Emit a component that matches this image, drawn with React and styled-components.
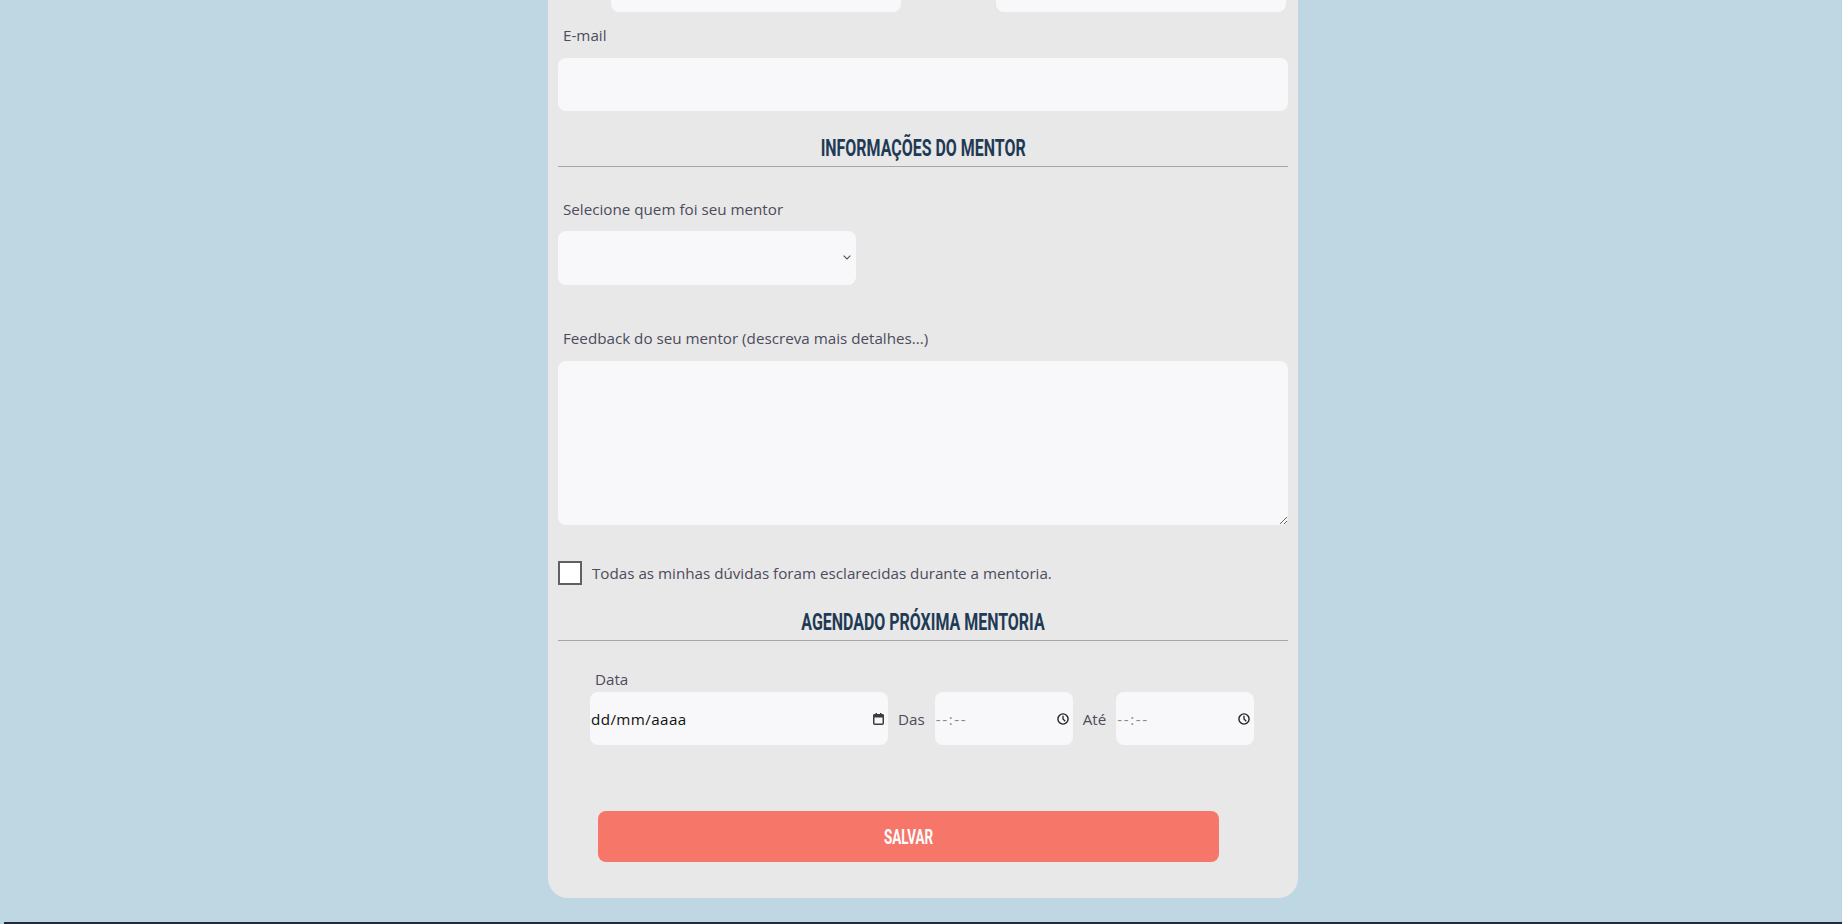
import React from "react";
import styled, { createGlobalStyle } from "styled-components";

const GlobalStyle = createGlobalStyle`
  * {
    box-sizing: border-box;
  }

  body {
    margin: 0;
    background: #bfd6e3;
    font-family: "Open Sans", "Noto Sans", sans-serif;
  }
`;

// the screenshot is taken scrolled down a bit, so the page starts above the window
const Page = styled.div`
  display: flex;
  flex-direction: column;
  align-items: center;
  margin-top: -95px;
  padding-left: 4px;
`;

const Card = styled.form`
  width: 750px;
  background: #e8e8e8;
  border-radius: 20px;
  padding: 20px 10px 36px;
  display: flex;
  flex-direction: column;
`;

const NameRow = styled.div`
  display: grid;
  grid-template-columns: 290px 290px;
  justify-content: end;
  column-gap: 95px;
  padding-right: 2px;
`;

const Field = styled.div`
  display: flex;
  flex-direction: column;
  align-items: flex-start;
  margin-top: ${(p) => p.$top || 0}px;
`;

const Label = styled.label`
  display: block;
  font-size: 15.2px;
  line-height: 22px;
  height: 22px;
  color: #4d4b5c;
  padding-left: 5px;
  margin-bottom: ${(p) => p.$gap ?? 12}px;
`;

const Input = styled.input`
  width: 100%;
  height: 53px;
  border: none;
  border-radius: 8px;
  background: #f8f8fa;
  outline: none;
  font-family: inherit;
`;

const SelectWrap = styled.div`
  position: relative;
  width: 298px;
  height: 54px;
`;

const Select = styled.select`
  appearance: none;
  width: 100%;
  height: 100%;
  border: none;
  border-radius: 8px;
  background: #f8f8fa;
  color: #333;
  font-family: inherit;
  outline: none;
  padding: 0 24px 0 8px;
`;

const Chevron = styled.svg`
  position: absolute;
  right: 5px;
  top: 24px;
  pointer-events: none;
`;

const TextArea = styled.textarea`
  display: block;
  width: 100%;
  height: 164px;
  border: none;
  border-radius: 8px;
  background: #f8f8fa;
  outline: none;
  font-family: inherit;
`;

const SectionTitle = styled.h2`
  display: flex;
  justify-content: center;
  align-items: center;
  height: 33px;
  margin: 23px 0 0;
  padding-bottom: 4px;
  border-bottom: 1px solid #a6a6a6;
  font-size: 24px;
`;

// condensed display lettering, narrowed from Roboto bold
const TitleText = styled.span`
  display: block;
  line-height: 28px;
  font-family: Roboto, "Liberation Sans", sans-serif;
  font-weight: 700;
  color: #1f3a55;
  text-transform: uppercase;
  white-space: nowrap;
  transform: scaleX(0.665);
`;

const CheckRow = styled.label`
  display: flex;
  align-items: center;
  gap: 10px;
  margin-top: 36px;
  height: 24px;
  font-size: 15.2px;
  color: #4d4b5c;
`;

const CheckBox = styled.input`
  appearance: none;
  margin: 0;
  width: 24px;
  height: 24px;
  border: 2px solid #606060;
  background: #fff;
`;

const DateBlock = styled.div`
  margin-top: 27px;
  padding-left: 32px;
`;

const DateRow = styled.div`
  display: flex;
  align-items: center;
  gap: 10px;
  height: 53px;
`;

const InlineLabel = styled.span`
  font-size: 15.2px;
  color: #4d4b5c;
`;

const PickerBox = styled.div`
  width: ${(p) => p.$width}px;
  height: 53px;
  border-radius: 8px;
  background: #f8f8fa;
  display: flex;
  align-items: center;
  padding: 0 4px 0 1px;
`;

const PickerInput = styled.input`
  flex: 1;
  min-width: 0;
  border: none;
  background: transparent;
  outline: none;
  padding: 0;
  font-family: inherit;
  font-size: 15.2px;
  letter-spacing: ${(p) => (p.$muted ? "1.6px" : "0.4px")};

  &::placeholder {
    color: ${(p) => (p.$muted ? "#8a8a8a" : "#111")};
  }
`;

const SaveButton = styled.button`
  display: flex;
  justify-content: center;
  align-items: center;
  margin: 66px 0 0 40px;
  width: 621px;
  height: 51px;
  border: none;
  border-radius: 8px;
  background: #f6766a;
  cursor: pointer;
`;

const ButtonText = styled.span`
  display: block;
  font-family: Roboto, "Liberation Sans", sans-serif;
  font-weight: 700;
  font-size: 20px;
  color: #fff;
  transform: scaleX(0.67);
`;

const Footer = styled.footer`
  margin-top: 24px;
  width: 100%;
  height: 60px;
  background: #232a3b;
`;

const CalendarIcon = () => (
  <svg width="11" height="12" viewBox="0 0 11 12">
    <rect x="0.75" y="1.75" width="9.5" height="9.5" rx="1" fill="none" stroke="#3c3c3c" strokeWidth="1.5" />
    <rect x="0.5" y="1.5" width="10" height="3" fill="#3c3c3c" />
    <rect x="2.5" y="0" width="1.5" height="2" fill="#3c3c3c" />
    <rect x="7" y="0" width="1.5" height="2" fill="#3c3c3c" />
  </svg>
);

const ClockIcon = () => (
  <svg width="12" height="12" viewBox="0 0 12 12">
    <circle cx="6" cy="6" r="5.1" fill="none" stroke="#222" strokeWidth="1.4" />
    <path d="M6 2.8V6l2.2 2.2" fill="none" stroke="#222" strokeWidth="1.3" />
  </svg>
);

export default function App() {
  return (
    <>
      <GlobalStyle />
      <Page>
        <Card onSubmit={(e) => e.preventDefault()}>
          <NameRow>
            <Field>
              <Label>Nome</Label>
              <Input type="text" />
            </Field>
            <Field>
              <Label>Sobrenome</Label>
              <Input type="text" />
            </Field>
          </NameRow>

          <Field $top={12}>
            <Label>E-mail</Label>
            <Input type="email" />
          </Field>

          <SectionTitle>
            <TitleText>Informações do mentor</TitleText>
          </SectionTitle>

          <Field $top={31}>
            <Label $gap={11}>Selecione quem foi seu mentor</Label>
            <SelectWrap>
              <Select defaultValue="">
                <option value=""></option>
                <option>Mentor 1</option>
                <option>Mentor 2</option>
              </Select>
              <Chevron width="8" height="5" viewBox="0 0 8 5">
                <path d="M0.6 0.6L4 4L7.4 0.6" fill="none" stroke="#555" strokeWidth="1.1" />
              </Chevron>
            </SelectWrap>
          </Field>

          <Field $top={42}>
            <Label>Feedback do seu mentor (descreva mais detalhes...)</Label>
            <TextArea />
          </Field>

          <CheckRow>
            <CheckBox type="checkbox" />
            Todas as minhas dúvidas foram esclarecidas durante a mentoria.
          </CheckRow>

          <SectionTitle>
            <TitleText>Agendado próxima mentoria</TitleText>
          </SectionTitle>

          <DateBlock>
            <Label $gap={2}>Data</Label>
            <DateRow>
              <PickerBox $width={298}>
                <PickerInput placeholder="dd/mm/aaaa" />
                <CalendarIcon />
              </PickerBox>
              <InlineLabel>Das</InlineLabel>
              <PickerBox $width={138}>
                <PickerInput $muted placeholder="--:--" />
                <ClockIcon />
              </PickerBox>
              <InlineLabel>Até</InlineLabel>
              <PickerBox $width={138}>
                <PickerInput $muted placeholder="--:--" />
                <ClockIcon />
              </PickerBox>
            </DateRow>
          </DateBlock>

          <SaveButton type="submit">
            <ButtonText>SALVAR</ButtonText>
          </SaveButton>
        </Card>
        <Footer />
      </Page>
    </>
  );
}
